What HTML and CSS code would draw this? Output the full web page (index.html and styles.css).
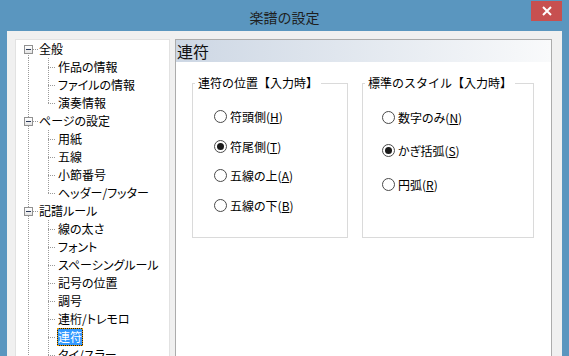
FILE: index.html
```html
<!DOCTYPE html>
<html lang="ja">
<head>
<meta charset="utf-8">
<title>楽譜の設定</title>
<link rel="stylesheet" href="styles.css">
</head>
<body>
<div class="window">
  <div class="titlebar">
    <span class="title">楽譜の設定</span>
    <div class="close">
      <svg width="10" height="10" viewBox="0 0 10 10"><path d="M1 1L9 9M9 1L1 9" stroke="#fff" stroke-width="2"/></svg>
    </div>
  </div>
  <div class="client">
    <div class="tree">
      <div class="row top first"><span class="c1"><span class="box"></span></span><span class="lbl">全般</span></div>
      <div class="row child"><span class="c1"></span><span class="c2"></span><span class="lbl">作品の情報</span></div>
      <div class="row child"><span class="c1"></span><span class="c2"></span><span class="lbl">ファイルの情報</span></div>
      <div class="row child last"><span class="c1"></span><span class="c2"></span><span class="lbl">演奏情報</span></div>
      <div class="row top"><span class="c1"><span class="box"></span></span><span class="lbl">ページの設定</span></div>
      <div class="row child"><span class="c1"></span><span class="c2"></span><span class="lbl">用紙</span></div>
      <div class="row child"><span class="c1"></span><span class="c2"></span><span class="lbl">五線</span></div>
      <div class="row child"><span class="c1"></span><span class="c2"></span><span class="lbl">小節番号</span></div>
      <div class="row child last"><span class="c1"></span><span class="c2"></span><span class="lbl">ヘッダー/フッター</span></div>
      <div class="row top"><span class="c1"><span class="box"></span></span><span class="lbl">記譜ルール</span></div>
      <div class="row child"><span class="c1"></span><span class="c2"></span><span class="lbl">線の太さ</span></div>
      <div class="row child"><span class="c1"></span><span class="c2"></span><span class="lbl">フォント</span></div>
      <div class="row child"><span class="c1"></span><span class="c2"></span><span class="lbl">スペーシングルール</span></div>
      <div class="row child"><span class="c1"></span><span class="c2"></span><span class="lbl">記号の位置</span></div>
      <div class="row child"><span class="c1"></span><span class="c2"></span><span class="lbl">調号</span></div>
      <div class="row child"><span class="c1"></span><span class="c2"></span><span class="lbl">連桁/トレモロ</span></div>
      <div class="row child"><span class="c1"></span><span class="c2"></span><span class="lbl sel">連符</span></div>
      <div class="row child"><span class="c1"></span><span class="c2"></span><span class="lbl">タイ/スラー</span></div>
    </div>
    <div class="panel">
      <div class="panel-head">連符</div>
      <div class="groups">
        <fieldset class="group g1">
          <legend>連符の位置【入力時】</legend>
          <div class="opts">
            <div class="opt"><span class="radio"></span><span>符頭側(<u>H</u>)</span></div>
            <div class="opt"><span class="radio on"></span><span>符尾側(<u>T</u>)</span></div>
            <div class="opt"><span class="radio"></span><span>五線の上(<u>A</u>)</span></div>
            <div class="opt"><span class="radio"></span><span>五線の下(<u>B</u>)</span></div>
          </div>
        </fieldset>
        <fieldset class="group g2">
          <legend>標準のスタイル【入力時】</legend>
          <div class="opts">
            <div class="opt"><span class="radio"></span><span>数字のみ(<u>N</u>)</span></div>
            <div class="opt"><span class="radio on"></span><span>かぎ括弧(<u>S</u>)</span></div>
            <div class="opt"><span class="radio"></span><span>円弧(<u>R</u>)</span></div>
          </div>
        </fieldset>
      </div>
    </div>
  </div>
</div>
</body>
</html>
```
FILE: styles.css
```css
* { box-sizing: border-box; }
html, body { margin: 0; padding: 0; }
body {
  background: #5a96bf;
  font-family: "Noto Sans CJK JP", "Noto Sans", sans-serif;
  font-size: 12px;
  color: #000;
  width: 569px;
  height: 356px;
  overflow: hidden;
}
.window { width: 569px; height: 356px; display: flex; flex-direction: column; }
.titlebar {
  position: relative;
  height: 31px;
  flex: none;
  display: flex;
  align-items: center;
  justify-content: center;
}
.title {
  font-size: 14px;
  color: #1e1e1e;
  line-height: 20px;
  margin-top: 2px;
}
.close {
  position: absolute;
  top: 1px;
  right: 7px;
  width: 31px;
  height: 20px;
  background: #c75050;
  display: flex;
  align-items: center;
  justify-content: center;
}
.close svg { display: block; }
.client {
  flex: 1;
  margin: 0 7px;
  background: #f0f0f0;
  display: flex;
  align-items: flex-start;
  padding-top: 8px;
  gap: 5px;
}
.tree {
  margin-left: 8px;
  width: 155px;
  height: 330px;
  background: #fff;
  border: 1px solid #e2e2e2;
  border-bottom: none;
  padding-top: 0;
  font-feature-settings: "palt" 1;
}
.row {
  height: 18px;
  display: flex;
  align-items: center;
  white-space: nowrap;
}
.c1, .c2 {
  height: 18px;
  flex: none;
  display: flex;
  align-items: center;
}
.c1 {
  width: 22px;
  background: repeating-linear-gradient(to bottom, #9a9a9a 0 1px, transparent 1px 2px) 12px 0 / 1px 18px no-repeat;
}
.top .c1 {
  background:
    repeating-linear-gradient(to bottom, #9a9a9a 0 1px, transparent 1px 2px) 12px 0 / 1px 18px no-repeat,
    repeating-linear-gradient(to right, #9a9a9a 0 1px, transparent 1px 2px) 17px 9px / 5px 1px no-repeat;
}
.top.first .c1 {
  background:
    repeating-linear-gradient(to bottom, #9a9a9a 0 1px, transparent 1px 2px) 12px 9px / 1px 9px no-repeat,
    repeating-linear-gradient(to right, #9a9a9a 0 1px, transparent 1px 2px) 17px 9px / 5px 1px no-repeat;
}
.c2 {
  width: 19px;
  background:
    repeating-linear-gradient(to bottom, #9a9a9a 0 1px, transparent 1px 2px) 10px 0 / 1px 18px no-repeat,
    repeating-linear-gradient(to right, #9a9a9a 0 1px, transparent 1px 2px) 10px 9px / 7px 1px no-repeat;
}
.last .c2 {
  background:
    repeating-linear-gradient(to bottom, #9a9a9a 0 1px, transparent 1px 2px) 10px 0 / 1px 10px no-repeat,
    repeating-linear-gradient(to right, #9a9a9a 0 1px, transparent 1px 2px) 10px 9px / 7px 1px no-repeat;
}
.box {
  width: 9px;
  height: 9px;
  margin-left: 8px;
  border: 1px solid #919191;
  background: linear-gradient(#ffffff, #e4e4e4);
  position: relative;
  display: flex;
  align-items: center;
  justify-content: center;
}
.box::after {
  content: "";
  width: 5px;
  height: 1px;
  background: #2b3a5a;
}
.lbl {
  height: 18px;
  line-height: 16px;
  border: 1px solid transparent;
  padding: 0;
}
.lbl.sel {
  background: #3399ff;
  color: #fff;
  border-color: #1a1a1a;
  outline: 1px dotted #f0a000;
  outline-offset: -1px;
}
.panel {
  width: 377px;
  height: 330px;
  background: #fff;
  border: 1px solid #acacac;
  border-bottom: none;
}
.panel-head {
  height: 22px;
  line-height: 22px;
  font-size: 16px;
  padding-left: 1px;
  color: #111;
  background: linear-gradient(to right, #cdd7e4, #f9fafb);
}
.groups {
  display: flex;
  gap: 14px;
  padding: 13px 0 0 16px;
}
.group {
  margin: 0;
  padding: 0;
  border: 1px solid #dadada;
  height: 163px;
  min-width: 0;
}
.g1 { width: 156px; }
.g2 { width: 172px; }
.group legend {
  margin-left: 2px;
  padding: 0 3px;
  line-height: 16px;
  font-size: 12px;
  color: #000;
}
.opts { display: flex; flex-direction: column; }
.g1 .opts { padding: 11px 0 0 21px; }
.g1 .opt { height: 29.5px; }
.g2 .opts { padding: 10px 0 0 19px; }
.g2 .opt { height: 33.3px; }
.opt {
  display: flex;
  align-items: center;
  gap: 3px;
  white-space: nowrap;
  font-feature-settings: "palt" 1;
}
.opt u { text-underline-offset: 1px; }
.radio {
  width: 13px;
  height: 13px;
  border-radius: 50%;
  border: 1px solid #4a4a4a;
  background: #fff;
  flex: none;
  display: flex;
  align-items: center;
  justify-content: center;
}
.radio.on::after {
  content: "";
  width: 7px;
  height: 7px;
  border-radius: 50%;
  background: #1a1a1a;
}
```
